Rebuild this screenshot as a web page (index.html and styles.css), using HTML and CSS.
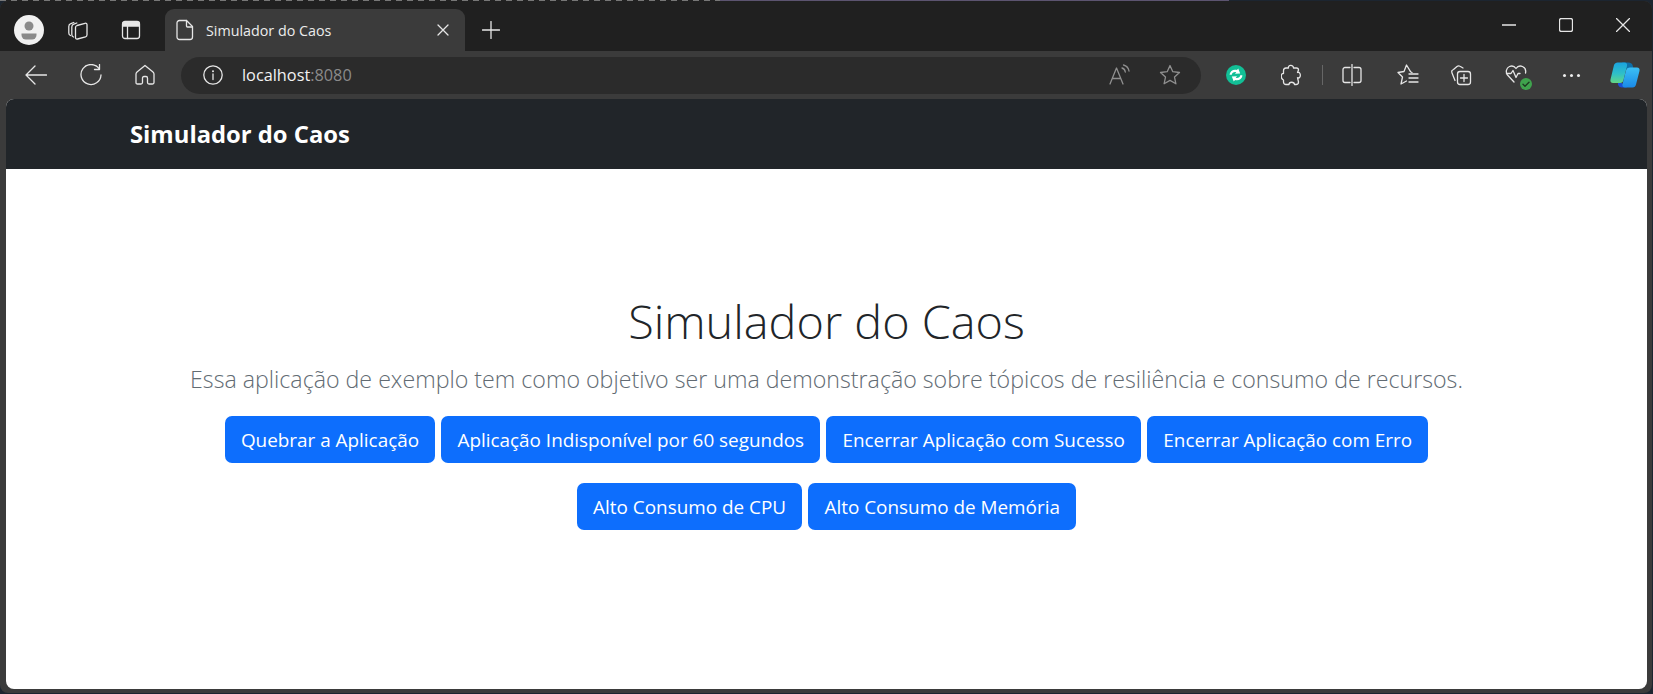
FILE: index.html
```html
<!DOCTYPE html>
<html lang="pt-BR">

<head>
    <meta charset="UTF-8">
    <meta name="viewport" content="width=device-width, initial-scale=1.0">
    <title>Simulador do Caos</title>
    <link rel="stylesheet" href="styles.css">
</head>

<body>
    <div class="window">
        <div class="tabstrip">
            <div class="tabtools">
                <div class="avatar">
                    <svg width="30" height="30" viewBox="0 0 30 30">
                        <circle cx="15" cy="15" r="15" fill="#f1f1f1" />
                        <circle cx="15" cy="11" r="4.5" fill="#8a8a8a" />
                        <path d="M7.5 18.5h15v1.5a4.5 4.5 0 0 1-4.5 4.5h-6a4.5 4.5 0 0 1-4.5-4.5z" fill="#8a8a8a" />
                    </svg>
                </div>
                <button class="icon tool-tabs">
                    <svg width="22" height="22" viewBox="0 0 22 22">
                        <path d="M3.500 16.500c-1.200-.4-1.700-1.200-1.700-2.500V7.500c0-1.500.6-2.300 2-2.800l3-1.200" />
                        <path d="M6.500 18c-1.200-.4-1.700-1.200-1.700-2.500V8c0-1.500.6-2.300 2-2.800l3-1.200" />
                        <path d="M8.500 8.500c0-1 .5-1.700 1.500-2l8-2.200c1.300-.3 2 .3 2 1.500v10c0 1-.5 1.700-1.500 2l-8 2.200c-1.300.3-2-.3-2-1.500z" />
                    </svg>
                </button>
                <button class="icon tool-vertical">
                    <svg width="20" height="20" viewBox="0 0 20 20">
                        <rect x="1.500" y="1.500" width="17" height="17" rx="2.500" />
                        <path d="M2 2.500h16v3.500H2z" fill="#e8e8e8" />
                        <path d="M6.500 6v12.500" />
                    </svg>
                </button>
            </div>
            <div class="tab">
                <svg class="fileicon" width="18" height="22" viewBox="0 0 18 22">
                    <path d="M3.500 1.500h7l6 6v10.500a2.500 2.500 0 0 1-2.500 2.500H3.500A2.500 2.500 0 0 1 1 18V4a2.500 2.500 0 0 1 2.500-2.500z" />
                    <path d="M10.500 1.500V7a1 1 0 0 0 1 1h5" />
                </svg>
                <span class="tabtitle">Simulador do Caos</span>
                <svg class="tabclose" width="12" height="12" viewBox="0 0 12 12">
                    <path d="M1 1l10 10M11 1L1 11" />
                </svg>
            </div>
            <button class="icon newtab">
                <svg width="18" height="18" viewBox="0 0 18 18">
                    <path d="M9 .5v17M.5 9h17" />
                </svg>
            </button>
            <div class="winctrls">
                <svg width="14" height="14" viewBox="0 0 14 14"><path d="M0 7h14" /></svg>
                <svg width="14" height="14" viewBox="0 0 14 14"><rect x=".5" y=".5" width="13" height="13" rx="2" /></svg>
                <svg width="14" height="14" viewBox="0 0 14 14"><path d="M.5 .5l13 13M13.500 .5l-13 13" /></svg>
            </div>
        </div>

        <div class="toolbar">
            <div class="navbtns">
                <button class="icon">
                    <svg width="22" height="20" viewBox="0 0 22 20"><path d="M21.500 10H1M10 1l-9 9 9 9" /></svg>
                </button>
                <button class="icon">
                    <svg width="22" height="22" viewBox="0 0 22 22"><path d="M19 4.500A10 10 0 1 0 21 11" /><path d="M19.500 .5v5h-5" /></svg>
                </button>
                <button class="icon">
                    <svg width="20" height="22" viewBox="0 0 20 22"><path d="M10 1.500l8 6.500c.6.500 1 1 1 2v8.500c0 1-.5 1.500-1.500 1.500H14c-1 0-1.500-.5-1.500-1.500V14c0-1-.5-1.500-1.500-1.500H9c-1 0-1.500.5-1.500 1.500v4.500c0 1-.5 1.500-1.500 1.500H2.500C1.500 20 1 19.500 1 18.500V10c0-1 .4-1.500 1-2z" /></svg>
                </button>
            </div>
            <div class="addressbar">
                <svg class="infoicon" width="20" height="20" viewBox="0 0 20 20">
                    <circle cx="10" cy="10" r="9.200" />
                    <path d="M10 9v5.500" />
                    <circle class="dot" cx="10" cy="6.300" r="1" />
                </svg>
                <span class="url">localhost<span class="port">:8080</span></span>
                <div class="addressright">
                    <svg class="dim" width="22" height="22" viewBox="0 0 22 22">
                        <path d="M1 20L7.500 4 14 20M3.500 14.500h8" />
                        <path d="M13 4c2 .5 3 2 3.300 4M14.500 1c3 .8 5 3 5.500 6" />
                    </svg>
                    <svg class="dim" width="22" height="22" viewBox="0 0 22 22">
                        <path d="M11 1.500l2.800 6.200 6.700.8-5 4.600 1.400 6.700-5.900-3.400-5.900 3.400 1.400-6.700-5-4.600 6.700-.8z" />
                    </svg>
                </div>
            </div>
            <div class="extensions">
                <svg class="ext-sync" width="20" height="20" viewBox="0 0 20 20">
                    <circle class="fillgreen" cx="10" cy="10" r="10" />
                    <path class="whitearrow" d="M3.500 9.500C4 6 7.500 3.800 11 5l1.200-1.500 2 5-5.200.3 1.300-1.700C8 6.500 6 7.800 5.500 10zM16.500 10.500C16 14 12.500 16.200 9 15l-1.200 1.500-2-5 5.200-.3-1.300 1.700c2.300.6 4.300-.7 4.800-2.900z" />
                </svg>
                <svg class="ext-puzzle" width="20" height="22" viewBox="0 0 20 22">
                    <path d="M7.500 4C6.500 1 12.500 0 12.500 4h3c1 0 2 1 2 2l-1 2.500c3-1.500 4 5 1 5.500-.5 0-1-.3-1-.3l1 4.300c0 1.500-1 2.500-2.500 2.500h-1.500c-.3-3-5.500-3-5.500 0H5c-1.500 0-2.500-1-2.500-2.500v-2C-.5 15-.5 9 2.500 9.500V7c0-1.500 1-3 2.500-3z" />
                </svg>
                <span class="divider"></span>
                <svg class="ext-split" width="20" height="22" viewBox="0 0 20 22">
                    <path d="M8 3.500H3a2 2 0 0 0-2 2v11a2 2 0 0 0 2 2h5M12 3.500h5a2 2 0 0 1 2 2v11a2 2 0 0 1-2 2h-5M10 .5v21" />
                </svg>
                <svg class="ext-fav" width="22" height="22" viewBox="0 0 22 22">
                    <path d="M15 8.500l-1.500-.8L9.500 1 7 7.500l-6 1 4.500 4.500L4 20l5.500-3" />
                    <path d="M12 10h9M12 14h9M12 18h9" />
                </svg>
                <svg class="ext-coll" width="22" height="22" viewBox="0 0 22 22">
                    <path d="M5 16.500L2 9c-.8-2 .2-3 1.500-3.500L7 2.500c1-.8 2-.8 3-.2l3 1.700" />
                    <rect x="7.500" y="7.500" width="13" height="13" rx="2.500" />
                    <path d="M14 10.500v7M10.500 14h7" />
                </svg>
                <div class="ext-health">
                    <svg width="24" height="24" viewBox="0 0 24 24">
                        <path d="M9 19L2.500 12C.5 9.500 1 5 4.500 3.500c2.500-1 5-.2 6.500 2 1.500-2.200 4-3 6.500-2 3 1.300 3.500 4.300 3 6.500" />
                        <path d="M1.500 10.500H6l2-3 3 7 2-4h2" />
                    </svg>
                    <svg class="okbadge" width="12" height="12" viewBox="0 0 12 12">
                        <circle cx="6" cy="6" r="6" />
                        <path d="M3 6.300l2 2 4-4" />
                    </svg>
                </div>
                <div class="ext-dots"><i></i><i></i><i></i></div>
                <svg class="ext-copilot" width="30" height="26" viewBox="0 0 30 26">
                    <defs>
                        <linearGradient id="cpa" x1="0" y1="0" x2="0" y2="1">
                            <stop offset="0" stop-color="#1aa3e0" />
                            <stop offset=".55" stop-color="#2fc0c8" />
                            <stop offset="1" stop-color="#62d684" />
                        </linearGradient>
                        <linearGradient id="cpb" x1="0" y1="0" x2="0" y2="1">
                            <stop offset="0" stop-color="#3cc0f4" />
                            <stop offset="1" stop-color="#1a8ae8" />
                        </linearGradient>
                    </defs>
                    <path d="M12 .5h6c3 0 4.500 1.500 5 4l.8 4.500h-6z" fill="#0f6fa8" />
                    <path d="M8 18l9 7.500H12c-2 0-3.500-1-4-3z" fill="#1a4fd6" />
                    <path d="M7.500 .5h7c2 0 3 1.500 2.500 3.500l-3.500 14c-.5 2-1.500 3-3.500 3H3c-2 0-3-1.500-2.500-3.500L4 3c.5-1.500 2-2.500 3.500-2.500z" fill="url(#cpa)" />
                    <path d="M20 5.500h7c2 0 3 1.500 2.500 3.500L26 22.500c-.5 2-1.500 3-3.500 3H15c-2 0-3-1.500-2.500-3.500L16 8.500c.5-2 2-3 4-3z" fill="url(#cpb)" />
                </svg>
            </div>
        </div>

        <div class="page">
            <nav class="navbar">
                <a class="brand">Simulador do Caos</a>
            </nav>
            <main class="content">
                <h1>Simulador do Caos</h1>
                <p class="lead">Essa aplicação de exemplo tem como objetivo ser uma demonstração sobre tópicos de resiliência e consumo de recursos.</p>
                <div class="actions">
                    <button class="btn">Quebrar a Aplicação</button>
                    <button class="btn">Aplicação Indisponível por 60 segundos</button>
                    <button class="btn">Encerrar Aplicação com Sucesso</button>
                    <button class="btn">Encerrar Aplicação com Erro</button>
                </div>
                <div class="actions">
                    <button class="btn">Alto Consumo de CPU</button>
                    <button class="btn">Alto Consumo de Memória</button>
                </div>
            </main>
        </div>
    </div>
</body>

</html>
```
FILE: styles.css
```css
* {
    margin: 0;
    padding: 0;
    box-sizing: border-box;
}

html,
body {
    height: 100%;
}

body {
    background:
        repeating-linear-gradient(90deg, #777 0 6px, #222 6px 11px) 0 0 / 720px 1px no-repeat,
        linear-gradient(90deg, #5c5470, #5c5470) 720px 0 / 509px 1px no-repeat,
        #1c2530;
    font-family: "Open Sans", "Liberation Sans", sans-serif;
    overflow: hidden;
}

button {
    font-family: inherit;
    background: none;
    border: none;
}

svg {
    display: block;
    flex: none;
    fill: none;
    stroke: #e6e6e6;
    stroke-width: 1.300;
    stroke-linecap: round;
    stroke-linejoin: round;
}

.window {
    display: flex;
    flex-direction: column;
    width: 1652px;
    height: 692px;
    margin-top: 1px;
    background-color: #3b3b3b;
    border-radius: 8px;
    overflow: hidden;
}

.icon {
    display: flex;
    justify-content: center;
    align-items: center;
}

/* tab strip */
.tabstrip {
    display: flex;
    align-items: flex-end;
    flex: none;
    height: 50px;
    background-color: #202020;
}

.tabtools {
    display: flex;
    align-items: center;
    width: 165px;
    height: 42px;
    padding-left: 14px;
    background-color: #202020;
}

.avatar {
    width: 30px;
    margin-right: 23px;
}

.avatar svg {
    stroke: none;
}

.tool-tabs,
.tool-vertical {
    width: 22px;
}

.tool-tabs {
    margin-right: 31px;
}

.tab {
    display: flex;
    align-items: center;
    width: 300px;
    height: 42px;
    padding-left: 11px;
    background-color: #3b3b3b;
    border-radius: 9px 9px 0 0;
}

.fileicon {
    margin-right: 12px;
}

.tabtitle {
    width: 231px;
    font-size: 14.300px;
    color: #ececec;
    white-space: nowrap;
}

.newtab {
    width: 18px;
    height: 42px;
    margin-left: 17px;
}

.winctrls {
    display: flex;
    align-self: flex-start;
    gap: 43px;
    margin: 17px 22px 0 auto;
}

/* toolbar */
.toolbar {
    display: flex;
    align-items: center;
    flex: none;
    height: 48px;
    background-color: #3b3b3b;
}

.navbtns {
    display: flex;
    align-items: center;
    gap: 33px;
    width: 181px;
    padding-left: 25px;
}

.addressbar {
    display: flex;
    align-items: center;
    width: 1020px;
    height: 37px;
    padding: 0 20px 0 22px;
    border-radius: 19px;
    background-color: #2b2b2b;
}

.infoicon {
    margin-right: 19px;
}

.infoicon .dot {
    fill: #e6e6e6;
    stroke: none;
}

.url {
    font-size: 16.300px;
    color: #f2f2f2;
}

.port {
    color: #8a8a8a;
}

.addressright {
    display: flex;
    gap: 28px;
    margin-left: auto;
}

.dim {
    stroke: #8f8f8f;
}

.extensions {
    display: flex;
    align-items: center;
    flex: 1;
    padding-left: 25px;
}

.fillgreen {
    fill: #12bf96;
    stroke: none;
}

.whitearrow {
    fill: #fff;
    stroke: none;
}

.ext-puzzle {
    margin-left: 35px;
}

.divider {
    width: 1px;
    height: 20px;
    margin-left: 21px;
    background-color: #666;
}

.ext-split {
    margin-left: 19px;
}

.ext-fav {
    margin-left: 35px;
}

.ext-coll {
    margin-left: 31px;
}

.ext-health {
    position: relative;
    width: 24px;
    margin-left: 33px;
}

.okbadge {
    position: absolute;
    right: -3px;
    bottom: -3px;
}

.okbadge circle {
    fill: #3fa34d;
    stroke: none;
}

.okbadge path {
    stroke: #1e3a22;
    stroke-width: 1.400;
}

.ext-dots {
    display: flex;
    gap: 4px;
    margin-left: 34px;
}

.ext-dots i {
    width: 3px;
    height: 3px;
    border-radius: 50%;
    background-color: #eee;
}

.ext-copilot {
    margin-left: 30px;
    stroke: none;
}

/* page */
.page {
    display: flex;
    flex-direction: column;
    flex: 1;
    margin: 0 5px 4px 6px;
    background-color: #fff;
    border-radius: 8px;
    overflow: hidden;
}

.navbar {
    flex: none;
    height: 70px;
    padding-left: 124px;
    background-color: #212529;
    line-height: 70px;
}

.brand {
    font-size: 23.800px;
    font-weight: 700;
    color: #fff;
}

.content {
    padding-top: 119px;
    text-align: center;
}

h1 {
    font-size: 46.800px;
    font-weight: 300;
    line-height: 66px;
    color: #212529;
}

.lead {
    margin-top: 8px;
    font-size: 23.200px;
    font-weight: 300;
    line-height: 34px;
    color: #626b73;
}

.actions {
    display: flex;
    justify-content: center;
    gap: 6px;
    margin-top: 20px;
}

.btn {
    height: 47px;
    padding: 0 16.200px;
    font-size: 18.900px;
    color: #fff;
    background-color: #0d6efd;
    border-radius: 7px;
}
```
